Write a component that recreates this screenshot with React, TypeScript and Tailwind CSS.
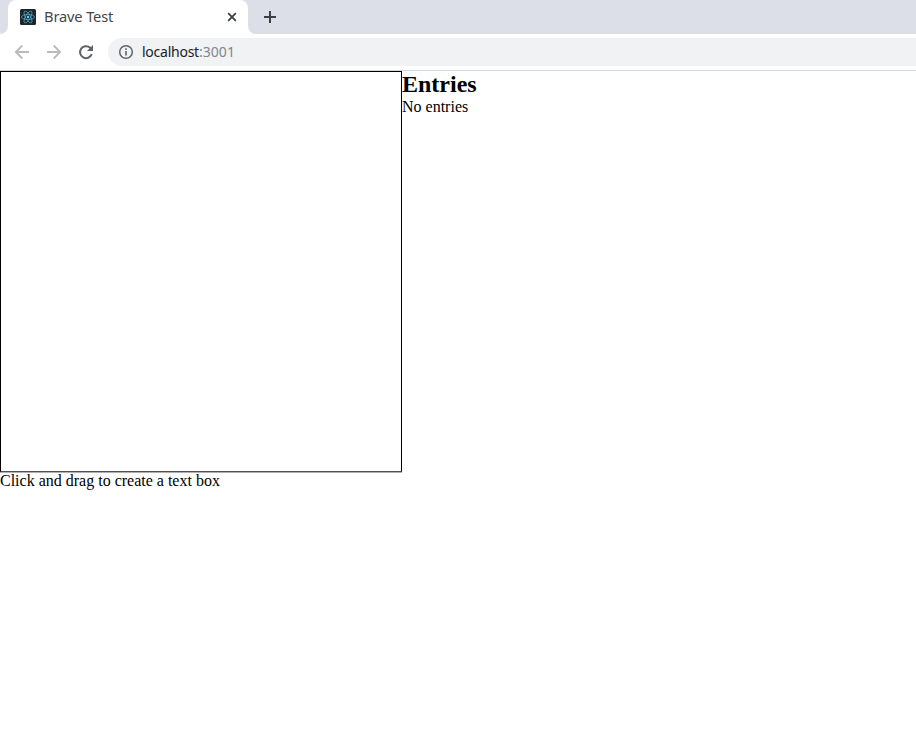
function ReactIcon() {
  return (
    <svg width="16" height="16" viewBox="0 0 16 16" fill="none" stroke="#4db3d1" strokeWidth="0.7">
      <rect width="16" height="16" rx="1.5" fill="#20232a" stroke="none" />
      <ellipse cx="8" cy="8" rx="6.6" ry="2.5" />
      <ellipse cx="8" cy="8" rx="6.6" ry="2.5" transform="rotate(60 8 8)" />
      <ellipse cx="8" cy="8" rx="6.6" ry="2.5" transform="rotate(120 8 8)" />
      <circle cx="8" cy="8" r="1.2" fill="#61dafb" stroke="none" />
    </svg>
  );
}

function TabStrip() {
  return (
    <div className="flex h-[34px] bg-[#dcdfe7]">
      <div className="flex w-2 flex-none bg-white">
        <div className="w-2 rounded-br-lg bg-[#dcdfe7]" />
      </div>
      <div className="flex w-60 flex-none items-center rounded-t-lg bg-white pl-3">
        <ReactIcon />
        <span className="ml-2 flex-1 pb-0.5 text-[14.67px] leading-5 tracking-[-0.15px] whitespace-nowrap text-[#45474a]">Brave Test</span>
        <svg className="mr-2" width="16" height="16" viewBox="0 0 16 16" stroke="#3c4043" strokeWidth="1.8">
          <path d="M4.2 4.2l7.6 7.6M11.8 4.2l-7.6 7.6" />
        </svg>
      </div>
      <div className="flex flex-1 bg-white">
        <div className="flex flex-1 items-center rounded-bl-lg bg-[#dcdfe7] pl-[14px]">
          <svg width="16" height="16" viewBox="0 0 16 16" stroke="#3c4043" strokeWidth="2">
            <path d="M8 2v12M2 8h12" />
          </svg>
        </div>
      </div>
    </div>
  );
}

function Toolbar() {
  return (
    <div className="flex h-[37px] border-b border-[#d5d6d8] bg-white pt-1 pl-[14px]">
      <div className="flex h-7 w-[94px] flex-none items-center gap-4">
        <svg width="16" height="16" viewBox="0 0 16 16" fill="none" stroke="#bababc" strokeWidth="1.8">
          <path d="M15 8H2M8.3 1.5L1.8 8l6.5 6.5" />
        </svg>
        <svg width="16" height="16" viewBox="0 0 16 16" fill="none" stroke="#bababc" strokeWidth="1.8">
          <path d="M1 8h13M7.7 1.5L14.2 8l-6.5 6.5" />
        </svg>
        <svg width="16" height="16" viewBox="0 0 16 16" fill="none">
          <path d="M13.7 10.2A6 6 0 1 1 12.2 3.8L13.5 5.2" stroke="#5f6368" strokeWidth="2" />
          <path d="M15 1v6H9z" fill="#5f6368" />
        </svg>
      </div>
      <div className="flex h-7 flex-1 items-center rounded-l-full bg-[#f1f2f4] pl-[10px]">
        <svg width="16" height="16" viewBox="0 0 16 16" fill="none" stroke="#5f6368">
          <circle cx="8" cy="8" r="6.3" strokeWidth="1.5" />
          <path d="M8 7v4.5M8 4.3V6" strokeWidth="1.6" />
        </svg>
        <span className="ml-2 text-[14px] leading-5 tracking-[-0.25px] whitespace-nowrap text-[#202124]">
          localhost<span className="tracking-[0.05px] text-[#80868b]">:3001</span>
        </span>
      </div>
    </div>
  );
}

export default function App() {
  return (
    <div className="h-[740px] w-full overflow-hidden bg-white font-['Noto_Sans',sans-serif]">
      <TabStrip />
      <Toolbar />
      <main className="flex font-['Liberation_Serif',serif] text-base leading-[18px] text-black">
        <section className="w-[402px] flex-none">
          <div className="h-[401px] border border-black border-b-[#505050]" />
          <div className="h-px bg-[#b0b0b0]" />
          <p className="leading-4">Click and drag to create a text box</p>
        </section>
        <section>
          <h2 className="text-2xl leading-[27px] font-bold">Entries</h2>
          <p>No entries</p>
        </section>
      </main>
    </div>
  );
}
